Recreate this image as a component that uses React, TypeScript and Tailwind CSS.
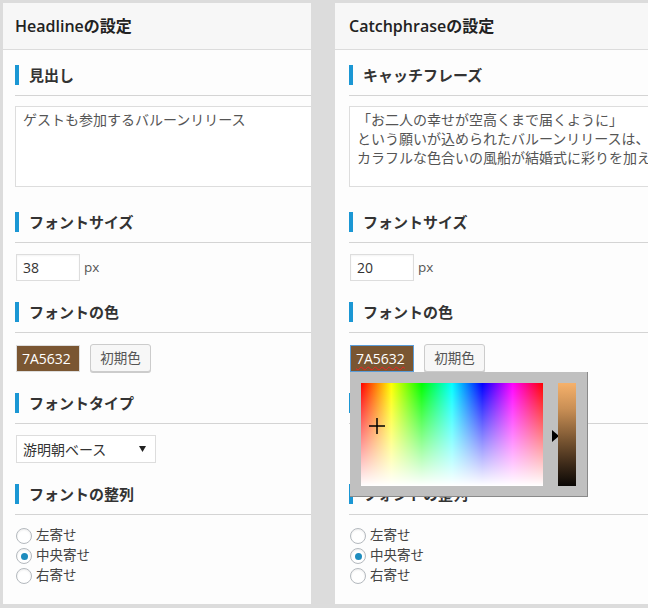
import type { ReactNode } from "react";

const Heading = ({ children, className = "" }: { children: ReactNode; className?: string }) => {
  return (
    <div className={`border-b border-[#d4d4d4] pb-[10px] ${className}`}>
      <div className="flex items-center h-[20px]">
        <span className="w-[4px] h-[20px] bg-[#1b97d4]" />
        <span className="ml-[10px] text-[15px] font-bold text-[#333] leading-none whitespace-nowrap">
          {children}
        </span>
      </div>
    </div>
  );
};

const Radio = ({ label, checked = false }: { label: string; checked?: boolean }) => (
  <label className="flex items-center h-[20px] ml-[1px]">
    <span className="w-[16px] h-[16px] rounded-full border border-[#b4b9be] bg-white flex items-center justify-center shadow-[inset_0_1px_2px_rgba(0,0,0,0.08)]">
      {checked && <span className="w-[7px] h-[7px] rounded-full bg-[#1e8cbe]" />}
    </span>
    <span className="ml-[4px] text-[13.5px] text-[#444] leading-none">{label}</span>
  </label>
);

const ColorPicker = () => {
  return (
    <div className="absolute left-[15px] top-[369px] w-[238px] h-[125px] bg-[#c0c0c0] border-r border-b border-[#8a8a8a] z-10">
      {/* hue / saturation area */}
      <div className="absolute left-[11px] top-[11px] w-[182px] h-[103px] bg-[linear-gradient(to_right,#ff0000,#ffff00,#00ff00,#00ffff,#0000ff,#ff00ff,#ff0000)]">
        <div className="absolute inset-0 bg-linear-to-b from-transparent to-white" />
        <svg className="absolute left-[8px] top-[35px]" width="16" height="16" viewBox="0 0 16 16">
          <path d="M8 0V16M0 8H16" stroke="#000" strokeWidth="1.5" />
        </svg>
      </div>
      {/* arrow */}
      <svg className="absolute left-[202px] top-[58px]" width="7" height="12" viewBox="0 0 7 12">
        <path d="M0 0L7 6L0 12Z" fill="#000" />
      </svg>
      {/* brightness strip */}
      <div className="absolute left-[208px] top-[11px] w-[18px] h-[103px] bg-[linear-gradient(to_bottom,#f6b16b,#c98f55_25%,#7a5632_55%,#3a2818_80%,#0a0705)]" />
    </div>
  );
};

type PanelProps = {
  title: string;
  heading: string;
  lines: string[];
  size: string;
  picker?: boolean;
  width: string;
  pad: string;
};

const Panel = ({ title, heading, lines, size, picker = false, width, pad }: PanelProps) => {
  return (
    <div className={`relative shrink-0 h-[601px] bg-[#fdfdfd] overflow-hidden ${width}`}>
      <div className={`h-[47px] bg-[#f7f7f7] border-b border-[#dcdcdc] flex items-center ${pad}`}>
        <div className="text-[16px] font-semibold text-[#222] whitespace-nowrap">{title}</div>
      </div>

      <div className={pad}>
        <Heading className="mt-[15px]">{heading}</Heading>
        <div className="mt-[10px] w-[330px] h-[81px] border border-[#dddddd] bg-white pl-[7px] pt-[3px] text-[14px] leading-[19px] text-[#555] whitespace-nowrap overflow-hidden">
          {lines.map((l) => (
            <div key={l}>{l}</div>
          ))}
        </div>

        <Heading className="mt-[25px]">フォントサイズ</Heading>
        <div className="mt-[11px] flex items-center">
          <div className="ml-[1px] w-[64px] h-[27px] border border-[#dddddd] bg-white pl-[6px] flex items-center text-[14px] text-[#333] shadow-[inset_0_1px_2px_rgba(0,0,0,0.05)]">
            {size}
          </div>
          <span className="ml-[4px] text-[13.5px] text-[#555]">px</span>
        </div>

        <Heading className="mt-[21px]">フォントの色</Heading>
        <div className="mt-[11px] flex items-center">
          <div
            className={`ml-[1px] w-[64px] h-[27px] bg-[#7a5632] pl-[5px] flex items-center text-[14px] text-white border ${
              picker ? "border-[#5b9dd9]" : "border-[#dddddd]"
            }`}
          >
            <span className={picker ? "underline decoration-wavy decoration-[#e22] decoration-1 underline-offset-2" : ""}>
              7A5632
            </span>
          </div>
          <button className="ml-[10px] w-[61px] h-[28px] rounded-[3px] border border-[#cccccc] bg-[#f7f7f7] text-[13.5px] text-[#555] shadow-[0_1px_0_#cccccc]">
            初期色
          </button>
        </div>

        <Heading className="mt-[21px]">フォントタイプ</Heading>
        <div className="mt-[11px] ml-[1px] w-[140px] h-[28px] border border-[#dddddd] bg-white flex items-center justify-between pl-[6px] pr-[9px]">
          <span className="text-[14px] text-[#333]">游明朝ベース</span>
          <svg width="7" height="6" viewBox="0 0 7 6">
            <path d="M0 0H7L3.5 6Z" fill="#222" />
          </svg>
        </div>

        <Heading className="mt-[21px]">フォントの整列</Heading>
        <div className="mt-[11px] flex flex-col">
          <Radio label="左寄せ" />
          <Radio label="中央寄せ" checked />
          <Radio label="右寄せ" />
        </div>
      </div>

      {picker && <ColorPicker />}
    </div>
  );
};

const App = () => {
  return (
    <div className="w-[648px] h-[608px] overflow-hidden bg-[#dcdcdc] flex pt-[3px] pl-[3px] gap-[24px] font-[family-name:'Open_Sans','Noto_Sans_CJK_JP',sans-serif]">
      <Panel
        width="w-[308px]"
        pad="pl-[12px]"
        title="Headlineの設定"
        heading="見出し"
        lines={["ゲストも参加するバルーンリリース"]}
        size="38"
      />
      <Panel
        width="w-[330px]"
        pad="pl-[14px]"
        title="Catchphraseの設定"
        heading="キャッチフレーズ"
        lines={[
          "「お二人の幸せが空高くまで届くように」",
          "という願いが込められたバルーンリリースは、",
          "カラフルな色合いの風船が結婚式に彩りを加えます。",
        ]}
        size="20"
        picker
      />
    </div>
  );
};

export default App;
